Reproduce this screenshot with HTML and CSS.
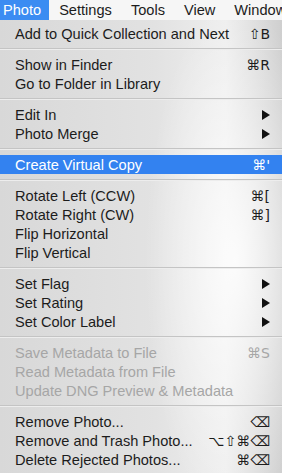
FILE: index.html
```html
<!DOCTYPE html>
<html>
<head>
    <title>Photo Menu</title>
    <link rel="stylesheet" href="styles.css">
</head>
<body>
    <div class="menubar">
        <span class="bar-item active">Photo</span>
        <span class="bar-item">Settings</span>
        <span class="bar-item">Tools</span>
        <span class="bar-item">View</span>
        <span class="bar-item">Window</span>
    </div>

    <div class="menu">
        <div class="item"><span>Add to Quick Collection and Next</span><span class="key">⇧B</span></div>
        <div class="sep"></div>
        <div class="item"><span>Show in Finder</span><span class="key">⌘R</span></div>
        <div class="item"><span>Go to Folder in Library</span></div>
        <div class="sep"></div>
        <div class="item"><span>Edit In</span><span class="arrow"></span></div>
        <div class="item"><span>Photo Merge</span><span class="arrow"></span></div>
        <div class="sep"></div>
        <div class="item selected"><span>Create Virtual Copy</span><span class="key">⌘'</span></div>
        <div class="sep"></div>
        <div class="item"><span>Rotate Left (CCW)</span><span class="key">⌘[</span></div>
        <div class="item"><span>Rotate Right (CW)</span><span class="key">⌘]</span></div>
        <div class="item"><span>Flip Horizontal</span></div>
        <div class="item"><span>Flip Vertical</span></div>
        <div class="sep"></div>
        <div class="item"><span>Set Flag</span><span class="arrow"></span></div>
        <div class="item"><span>Set Rating</span><span class="arrow"></span></div>
        <div class="item"><span>Set Color Label</span><span class="arrow"></span></div>
        <div class="sep"></div>
        <div class="item disabled"><span>Save Metadata to File</span><span class="key">⌘S</span></div>
        <div class="item disabled"><span>Read Metadata from File</span></div>
        <div class="item disabled"><span>Update DNG Preview &amp; Metadata</span></div>
        <div class="sep"></div>
        <div class="item"><span>Remove Photo...</span><span class="key">⌫</span></div>
        <div class="item"><span>Remove and Trash Photo...</span><span class="key">⌥⇧⌘⌫</span></div>
        <div class="item"><span>Delete Rejected Photos...</span><span class="key">⌘⌫</span></div>
    </div>
</body>
</html>
```

FILE: styles.css
```css
body {
    margin: 0;
    width: 282px;
    height: 473px;
    overflow: hidden;
    font-family: "Liberation Sans", Arial, sans-serif;
    font-size: 14.6px;
    color: #1c1c1c;
    background: #d6d6d6;
}
.menubar {
    display: flex;
    height: 20px;
    align-items: center;
    background: #f6f6f6;
    white-space: nowrap;
}
.bar-item {
    line-height: 20px;
    padding: 0 9px 0 10px;
}
.bar-item.active {
    background: #3b8cf2;
    color: #fff;
    padding: 0 8px 0 3px;
}
.menu {
    padding-top: 4px;
    height: 449px;
    background:
        radial-gradient(ellipse 90px 260px at 235px 240px, rgba(255,255,255,0.85), rgba(255,255,255,0) 100%),
        linear-gradient(to right, #d8d8d8 0%, #e2e2e2 55%, #eeeeee 80%, #cfcfcf 100%);
}
.item {
    display: flex;
    justify-content: space-between;
    align-items: center;
    height: 19px;
    padding: 0 12px 0 15px;
    white-space: nowrap;
}
.item.selected {
    background: #3382f0;
    color: #fff;
}
.item.disabled {
    color: #a6a6a6;
}
.key {
    font-family: "DejaVu Sans", sans-serif;
    font-size: 14px;
}
.arrow {
    width: 0;
    height: 0;
    border-top: 5px solid transparent;
    border-bottom: 5px solid transparent;
    border-left: 8px solid #111;
}
.sep {
    height: 1px;
    margin: 5px 0;
    background: #c4c4c4;
    border-bottom: 1px solid #ededed;
}
```
